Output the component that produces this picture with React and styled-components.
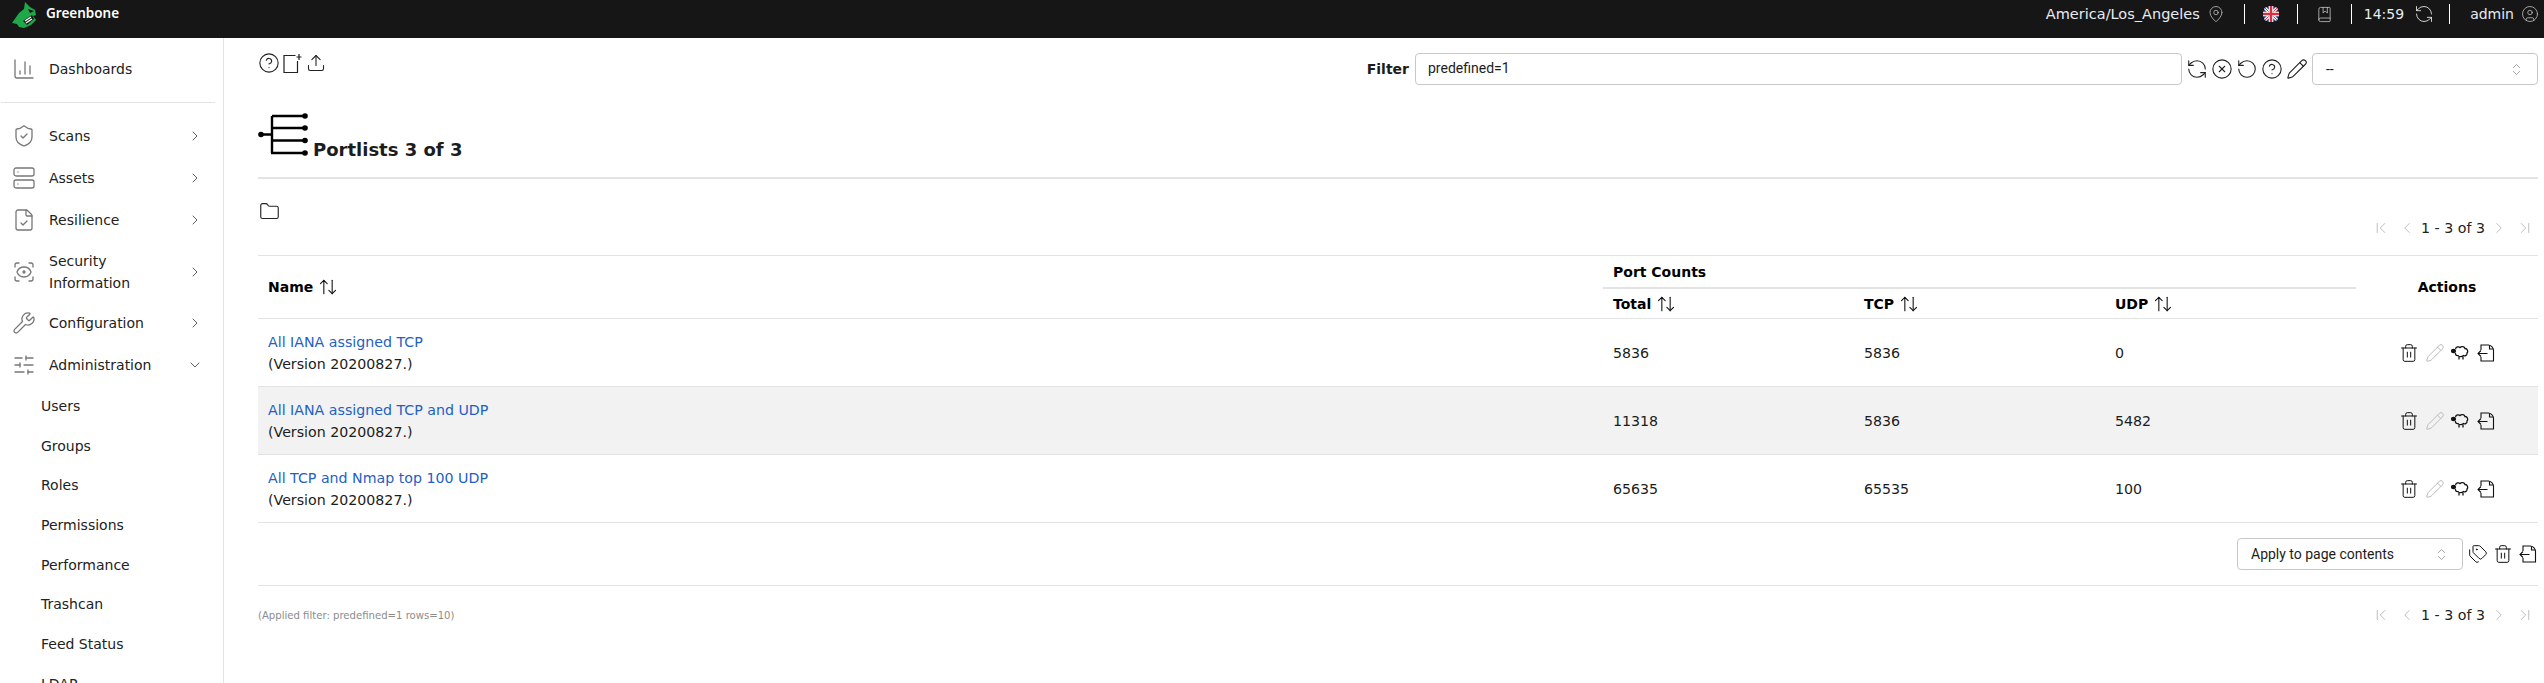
import React from 'react';
import styled, { createGlobalStyle } from 'styled-components';
import {
  ChartColumn, ShieldCheck, Server, FileCheck, ScanEye, Wrench, SlidersHorizontal, ChevronRight, ChevronDown,
  CircleHelp, Upload, Folder, RefreshCcw, CircleX, RotateCcw, Pencil, ChevronsUpDown, MapPin, BookMarked, CircleUser,
  ChevronFirst, ChevronLeft, ChevronLast, Trash2, Tags, ArrowUpDown,
} from 'lucide-react';

const sans = '"DejaVu Sans", sans-serif';

const GlobalStyle = createGlobalStyle`
  html, body { margin: 0; padding: 0; background: #fff; height: 100%; overflow: hidden; }
  body { font-family: ${sans}; font-size: 14px; color: #1c1c1c; }
`;

const Page = styled.div`
  width: 2544px;
  height: 683px;
  display: flex;
  flex-direction: column;
  overflow: hidden;
`;

const TopBar = styled.header`
  height: 38px;
  flex: none;
  background: #161616;
  color: #fff;
  display: flex;
  align-items: center;
  justify-content: space-between;
  padding-left: 11px;
`;

const Brand = styled.div`
  display: flex;
  align-items: flex-start;
  gap: 9px;
  height: 100%;
  font-family: "Noto Sans", sans-serif;
  font-size: 13.5px;
  font-weight: 600;
  line-height: 26px;
`;

const LogoSvg = styled.svg`
  margin-top: 1px;
`;

const BarRight = styled.div`
  display: flex;
  align-items: center;
  height: 100%;
  padding-bottom: 10px;
  box-sizing: border-box;
  font-size: 14px;
  color: #e6ecf2;
`;

const BarCell = styled.div`
  display: flex;
  align-items: center;
  gap: ${(p) => p.$gap || 7}px;
  height: 20px;
  padding: 0 ${(p) => p.$r}px 0 ${(p) => p.$l}px;
  border-left: ${(p) => (p.$first ? 'none' : '1px solid #fff')};
  font-size: ${(p) => p.$fs || 14}px;
  svg { color: ${(p) => p.$icon || '#c9c9c9'}; }
`;

const Body = styled.div`
  flex: 1;
  display: flex;
  min-height: 0;
`;

const Side = styled.nav`
  width: 223px;
  flex: none;
  border-right: 1px solid #e3e3e3;
  overflow: hidden;
`;

const Dash = styled.div`
  height: 64px;
  margin: 0 8px 12px 1px;
  border-bottom: 1px solid #e3e3e3;
`;

const NavItem = styled.div`
  display: flex;
  align-items: center;
  height: ${(p) => p.$h || 42}px;
  padding-left: ${(p) => (p.$inset ? 11 : 12)}px;
  font-size: 14px;
  line-height: 22px;
  color: #222;
  > svg:first-child { color: #777; flex: none; }
`;

const NavLabel = styled.span`
  flex: 1;
  margin-left: 13px;
`;

const NavChevron = styled.span`
  display: flex;
  margin-right: 20px;
  color: #444;
`;

const SubItem = styled.div`
  height: 39.7px;
  padding-left: 41px;
  display: flex;
  align-items: center;
  font-size: 14px;
  color: #222;
`;

const Main = styled.main`
  flex: 1;
  min-width: 0;
  padding: 14px 6px 0 34px;
`;

const ToolRow = styled.div`
  display: flex;
  justify-content: space-between;
  align-items: flex-start;
  height: 53px;
`;

const IconRow = styled.div`
  display: flex;
  align-items: center;
  gap: ${(p) => p.$gap ?? 4}px;
`;

const FilterBox = styled.div`
  display: flex;
  align-items: center;
  gap: 4px;
  margin-top: 1px;
`;

const FilterLabel = styled.label`
  font-weight: bold;
  font-size: 14px;
  margin-right: 2px;
`;

const FilterInput = styled.div`
  width: 767px;
  height: 32px;
  box-sizing: border-box;
  border: 1px solid #c8c8c8;
  border-radius: 4px;
  padding-left: 12px;
  font-family: Roboto, sans-serif;
  font-size: 14px;
  line-height: 29px;
`;

const Select = styled.div`
  display: flex;
  align-items: center;
  justify-content: space-between;
  box-sizing: border-box;
  width: 226px;
  height: 32px;
  border: 1px solid #c8c8c8;
  border-radius: 4px;
  padding: 0 13px;
  font-family: Roboto, sans-serif;
  font-size: 14px;
  svg { color: #888; }
`;

const Heading = styled.div`
  display: flex;
  align-items: flex-end;
  height: 52px;
  border-bottom: 2px solid #e3e3e3;
  padding-bottom: 20px;
  margin-bottom: 21px;
  gap: 5px;
`;

const Title = styled.h1`
  margin: 0 0 -3px;
  font-size: 18px;
  font-weight: bold;
  line-height: 20px;
`;

const PagerRow = styled.div`
  display: flex;
  justify-content: space-between;
  align-items: ${(p) => p.$align || 'flex-start'};
  padding-right: 4px;
`;

const Pager = styled.div`
  display: flex;
  align-items: center;
  gap: 5px;
  margin-top: ${(p) => p.$mt || 0}px;
  font-size: 14.2px;
  color: #222;
  svg { color: #bbb; }
  svg:first-child { margin-right: 3px; }
  svg:last-child { margin-left: 3px; }
`;

const FolderSlot = styled.div`
  padding: 1px 0 0 1px;
  display: flex;
`;

const Table = styled.table`
  width: 100%;
  border-collapse: collapse;
  table-layout: fixed;
  margin-top: 18px;
  font-size: 14px;
`;

const Col = styled.col`
  width: ${(p) => p.$w}px;
`;

const Th = styled.th`
  text-align: ${(p) => p.$align || 'left'};
  padding: 0 10px;
  font-size: 14px;
  font-weight: bold;
  color: #000;
  vertical-align: middle;
  height: ${(p) => p.$h || 'auto'};
  border-top: ${(p) => (p.$top ? '1px solid #e3e3e3' : 'none')};
  border-bottom: ${(p) => p.$bottom || '1px solid #e3e3e3'};
`;

const SortLabel = styled.span`
  display: inline-flex;
  align-items: center;
  gap: 5px;
`;

const Row = styled.tr`
  height: 68px;
  background: ${(p) => (p.$shade ? '#f2f2f2' : '#fff')};
`;

const Td = styled.td`
  padding: 0 10px;
  border-bottom: 1px solid #e3e3e3;
  color: #1c1c1c;
  line-height: 22px;
  font-size: 14.2px;
`;

const ActionTd = styled(Td)`
  padding: 0 0 0 43px;
`;

const NameLink = styled.a`
  display: block;
  color: #1f60c4;
  text-decoration: none;
`;

const BulkRow = styled.div`
  display: flex;
  justify-content: flex-end;
  align-items: center;
  gap: 5px;
  height: 62px;
  border-bottom: 1px solid #e3e3e3;
`;

const Applied = styled.div`
  font-size: 10.1px;
  color: #8c8c8c;
`;

const FooterPager = styled(PagerRow)`
  margin-top: 20px;
`;

function Logo() {
  return (
    <LogoSvg width="26" height="28" viewBox="0 0 26 28">
      <path d="M1 22 L8 12 L13 8 L14 1 L19 6 L24 9 L25 14 L22 15 L25 19 L20 24 L13 27 L8 26 L6 23 Z" fill="#1fa84a" />
      <path d="M17 8 L23 10 L19 12 Z" fill="#161616" />
      <path d="M12 20 L21 14 L23 18 L16 24 Z" fill="#161616" />
      <path d="M14 20 L20 16 M15 22 L21 18" stroke="#fff" strokeWidth="1.4" />
    </LogoSvg>
  );
}

function UkFlag() {
  return (
    <svg width="16" height="16" viewBox="0 0 16 16">
      <circle cx="8" cy="8" r="8" fill="#2b4a9b" />
      <path d="M2 2 L14 14 M14 2 L2 14" stroke="#fff" strokeWidth="3" />
      <path d="M2 2 L14 14 M14 2 L2 14" stroke="#d8303f" strokeWidth="1" />
      <path d="M8 0 V16 M0 8 H16" stroke="#fff" strokeWidth="4.5" />
      <path d="M8 0 V16 M0 8 H16" stroke="#d8303f" strokeWidth="2.5" />
    </svg>
  );
}

function NewIcon() {
  return (
    <svg width="20" height="20" viewBox="0 0 20 20" fill="none" stroke="#222" strokeWidth="1.2">
      <path d="M12.5 2.5 H1 V19.5 H14.5 V8" />
      <path d="M16 1 V7 M13.5 4 H18.5" />
    </svg>
  );
}

function PortListIcon() {
  return (
    <svg width="50" height="44" viewBox="0 0 50 44" fill="none" stroke="#000" strokeWidth="2.4">
      <path d="M3 21.5 H14 M14 3 V40 M14 3 H47 M14 15 H47 M14 27.5 H47 M13 40 H47" />
      <g fill="#000" stroke="none">
        <circle cx="3" cy="21.5" r="2.8" />
        <circle cx="47" cy="3" r="2.8" />
        <circle cx="47" cy="15" r="2.8" />
        <circle cx="47" cy="27.5" r="2.8" />
        <circle cx="47" cy="40" r="2.8" />
      </g>
    </svg>
  );
}

function CloneIcon() {
  return (
    <svg width="20" height="20" viewBox="0 0 20 20" fill="none" stroke="#111" strokeWidth="1.3">
      <path d="M5.5 6 C6 3.5 9 3.5 10 4.5 C11.5 3 14.5 3.5 15 5.5 C17.5 5.5 18.5 8.5 17 10 C17.5 12 15 13.5 13.5 12.5 C12 14 9 14 8 12.5 C6.5 13 5 11.5 5.5 10" />
      <path d="M9 13.5 V16.5 M13 13.5 V16.5" />
      <ellipse cx="3.5" cy="8" rx="2.6" ry="2.2" fill="#111" stroke="none" />
    </svg>
  );
}

function ExportIcon() {
  return (
    <svg width="20" height="20" viewBox="0 0 20 20" fill="none" stroke="#111" strokeWidth="1.1">
      <path d="M5 7 V2 H12.5 C15 2.5 17 4.5 17.5 7 V18 H5 V14" />
      <path d="M13.5 2.5 V6 H17.5" />
      <path d="M11.5 10.5 H2 M5 7.5 L2 10.5 L5 13.5" />
    </svg>
  );
}

const ROWS = [
  { name: 'All IANA assigned TCP', total: 5836, tcp: 5836, udp: 0 },
  { name: 'All IANA assigned TCP and UDP', total: 11318, tcp: 5836, udp: 5482, shade: true },
  { name: 'All TCP and Nmap top 100 UDP', total: 65635, tcp: 65535, udp: 100 },
];

const SUB_ITEMS = ['Users', 'Groups', 'Roles', 'Permissions', 'Performance', 'Trashcan', 'Feed Status', 'LDAP'];

function PagerBar({ mt }) {
  return (
    <Pager $mt={mt}>
      <ChevronFirst size={18} strokeWidth={1.3} />
      <ChevronLeft size={18} strokeWidth={1.3} />
      <span>1 - 3 of 3</span>
      <ChevronRight size={18} strokeWidth={1.3} />
      <ChevronLast size={18} strokeWidth={1.3} />
    </Pager>
  );
}

function Sortable({ children }) {
  return (
    <SortLabel>
      {children}
      <ArrowUpDown size={20} strokeWidth={1.3} color="#111" />
    </SortLabel>
  );
}

function NavEntry({ icon: Icon, children, open, h }) {
  return (
    <NavItem $h={h}>
      <Icon size={24} strokeWidth={1.3} />
      <NavLabel>{children}</NavLabel>
      <NavChevron>{open ? <ChevronDown size={16} strokeWidth={1.3} /> : <ChevronRight size={16} strokeWidth={1.3} />}</NavChevron>
    </NavItem>
  );
}

export default function App() {
  return (
    <Page>
      <GlobalStyle />
      <TopBar>
        <Brand>
          <Logo />
          Greenbone
        </Brand>
        <BarRight>
          <BarCell $first $l={20} $r={19} $fs={14.5}>
            America/Los_Angeles
            <MapPin size={18} strokeWidth={1} />
          </BarCell>
          <BarCell $l={18} $r={18}>
            <UkFlag />
          </BarCell>
          <BarCell $l={18} $r={18}>
            <BookMarked size={17} strokeWidth={1.1} />
          </BarCell>
          <BarCell $l={12} $r={15} $gap={10} $icon="#f0f0f0">
            14:59
            <RefreshCcw size={20} strokeWidth={1} />
          </BarCell>
          <BarCell $l={20} $r={5}>
            admin
            <CircleUser size={18} strokeWidth={1} />
          </BarCell>
        </BarRight>
      </TopBar>
      <Body>
        <Side>
          <Dash>
            <NavItem $h={62} $inset>
              <ChartColumn size={24} strokeWidth={1.3} />
              <NavLabel>Dashboards</NavLabel>
            </NavItem>
          </Dash>
          <NavEntry icon={ShieldCheck}>Scans</NavEntry>
          <NavEntry icon={Server}>Assets</NavEntry>
          <NavEntry icon={FileCheck}>Resilience</NavEntry>
          <NavEntry icon={ScanEye} h={61}>Security Information</NavEntry>
          <NavEntry icon={Wrench}>Configuration</NavEntry>
          <NavEntry icon={SlidersHorizontal} open>Administration</NavEntry>
          {SUB_ITEMS.map((s) => <SubItem key={s}>{s}</SubItem>)}
        </Side>
        <Main>
          <ToolRow>
            <IconRow $gap={3}>
              <CircleHelp size={22} strokeWidth={1.2} color="#222" />
              <NewIcon />
              <Upload size={20} strokeWidth={1.3} color="#222" />
            </IconRow>
            <FilterBox>
              <FilterLabel>Filter</FilterLabel>
              <FilterInput>predefined=1</FilterInput>
              <IconRow $gap={3}>
                <RefreshCcw size={22} strokeWidth={1.2} color="#222" />
                <CircleX size={22} strokeWidth={1.2} color="#222" />
                <RotateCcw size={22} strokeWidth={1.2} color="#222" />
                <CircleHelp size={22} strokeWidth={1.2} color="#222" />
                <Pencil size={22} strokeWidth={1.2} color="#222" />
              </IconRow>
              <Select>
                --
                <ChevronsUpDown size={15} strokeWidth={1.2} />
              </Select>
            </FilterBox>
          </ToolRow>
          <Heading>
            <PortListIcon />
            <Title>Portlists 3 of 3</Title>
          </Heading>
          <PagerRow>
            <FolderSlot>
              <Folder size={21} strokeWidth={1.3} color="#222" />
            </FolderSlot>
            <PagerBar mt={19} />
          </PagerRow>
          <Table>
            <colgroup>
              <Col $w={1345} />
              <Col $w={251} />
              <Col $w={251} />
              <Col $w={251} />
              <col />
            </colgroup>
            <thead>
              <tr>
                <Th rowSpan={2} $top><Sortable>Name</Sortable></Th>
                <Th colSpan={3} $top $h="31px" $bottom="2px solid #e3e3e3">Port Counts</Th>
                <Th rowSpan={2} $top $align="center">Actions</Th>
              </tr>
              <tr>
                <Th $h="29px"><Sortable>Total</Sortable></Th>
                <Th><Sortable>TCP</Sortable></Th>
                <Th><Sortable>UDP</Sortable></Th>
              </tr>
            </thead>
            <tbody>
              {ROWS.map((r) => (
                <Row key={r.name} $shade={r.shade}>
                  <Td>
                    <NameLink>{r.name}</NameLink>
                    (Version 20200827.)
                  </Td>
                  <Td>{r.total}</Td>
                  <Td>{r.tcp}</Td>
                  <Td>{r.udp}</Td>
                  <ActionTd>
                    <IconRow $gap={5.5}>
                      <Trash2 size={20} strokeWidth={1.2} color="#111" />
                      <Pencil size={20} strokeWidth={1.2} color="#bbb" />
                      <CloneIcon />
                      <ExportIcon />
                    </IconRow>
                  </ActionTd>
                </Row>
              ))}
            </tbody>
          </Table>
          <BulkRow>
            <Select>
              Apply to page contents
              <ChevronsUpDown size={15} strokeWidth={1.2} />
            </Select>
            <Tags size={20} strokeWidth={1.2} color="#111" />
            <Trash2 size={20} strokeWidth={1.2} color="#111" />
            <ExportIcon />
          </BulkRow>
          <FooterPager $align="center">
            <Applied>(Applied filter: predefined=1 rows=10)</Applied>
            <PagerBar />
          </FooterPager>
        </Main>
      </Body>
    </Page>
  );
}
